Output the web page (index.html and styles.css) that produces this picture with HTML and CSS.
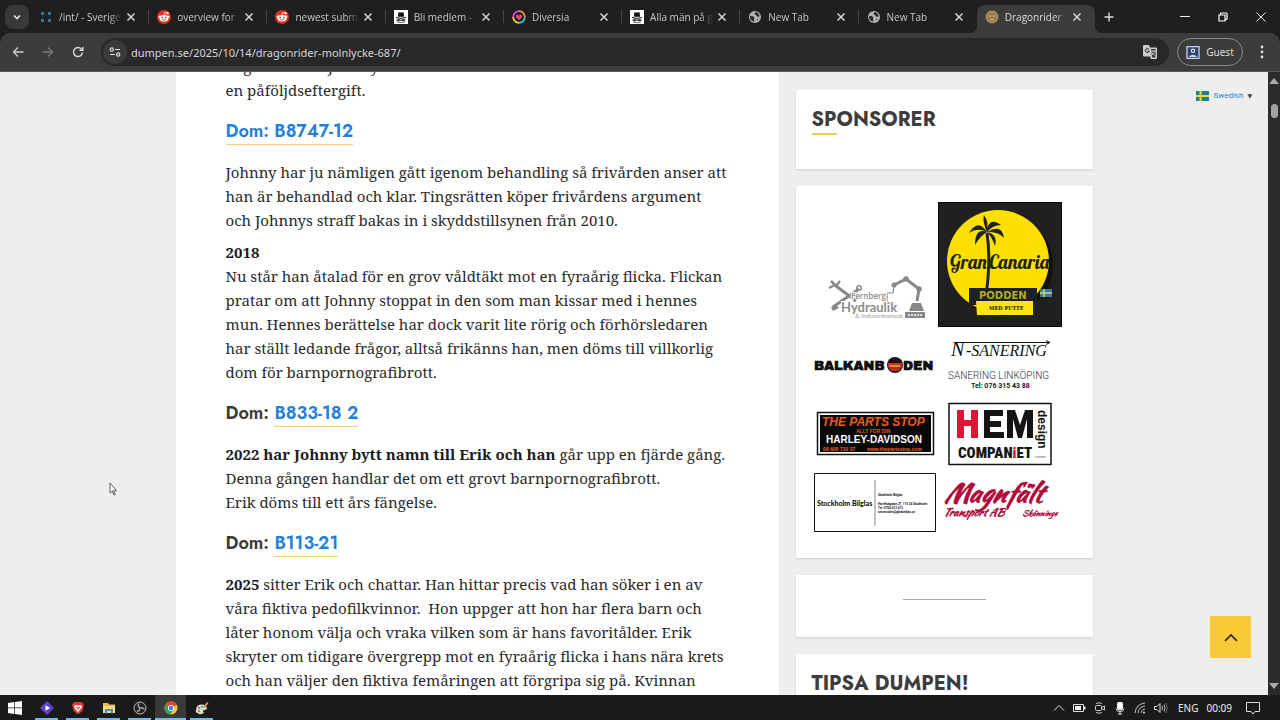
FILE: index.html
```
<!DOCTYPE html>
<html lang="sv">
<head>
<meta charset="utf-8">
<title>Dragonrider</title>
<link rel="stylesheet" href="styles.css">
</head>
<body>
<svg width="0" height="0" class="defs" aria-hidden="true">
  <symbol id="x" viewBox="0 0 10 10"><path d="M1.5 1.5l7 7M8.500 1.500l-7 7" stroke="#d6d6d6" stroke-width="1.500" fill="none"/></symbol>
  <symbol id="reddit" viewBox="0 0 14 14"><circle cx="7" cy="7" r="7" fill="#e2321c"/><circle cx="10.600" cy="3.200" r="1.100" fill="#fff"/><path d="M7 5.200l.7-2.700 2.400.6" stroke="#fff" stroke-width=".7" fill="none"/><circle cx="2.900" cy="6.800" r="1.300" fill="#fff"/><circle cx="11.100" cy="6.800" r="1.300" fill="#fff"/><ellipse cx="7" cy="8.200" rx="4.400" ry="3.200" fill="#fff"/><circle cx="5.200" cy="7.600" r=".9" fill="#e2321c"/><circle cx="8.800" cy="7.600" r=".9" fill="#e2321c"/><path d="M5.200 9.500q1.800 1.200 3.600 0" stroke="#333" stroke-width=".7" fill="none"/></symbol>
  <symbol id="hat" viewBox="0 0 14 14"><path d="M0 0h14v14H0z" fill="#fff"/><path d="M4.500 2q2.500 1 5 0l.6 4.800h-6.200z" fill="#111"/><path d="M2 7.500q5 1.500 10 0" stroke="#111" stroke-width="1.200" fill="none"/><path d="M2 10l2.500-1.200 2.500 1 2.500-1L12 10l-2 1.500-3-.8-3 .8z" fill="#444"/><path d="M3 12q4 1.500 8 0" stroke="#777" fill="none"/></symbol>
  <symbol id="globe" viewBox="0 0 14 14"><circle cx="7" cy="7" r="6" fill="#b4b4b4"/><path d="M2.200 5.800l3 .4 1.300 1.800-.6 1.600.8 1.900Q3 11.500 2 8zM7 2.500l-.5 1.800 1.500.6 1 1.600 2.500.3Q11.500 3 8 2zM9 9l1.600-.3-1.300 2z" fill="#2b2b2b"/></symbol>
</svg>
<div class="desktop">
  <div class="tabstrip">
    <button class="tabsearch" aria-label="Sök flikar"><svg width="10" height="10" viewBox="0 0 10 10"><path d="M2 3.500l3 3 3-3" stroke="#e8e8e8" stroke-width="1.600" fill="none"/></svg></button>
    <div class="tabs">
      <div class="tab"><svg class="fav" viewBox="0 0 14 14"><g fill="#3d8fb0"><path d="M2 2h3v3H2zM9 2h3v3H9zM2 9h3v3H2zM9 9h3v3H9z" opacity=".8"/></g><path d="M3 7h1M10 7h1M7 3v1M7 10v1" stroke="#264b59"/></svg><span>/int/ - Sverige</span><button aria-label="Stäng"><svg><use href="#x"/></svg></button></div>
      <div class="tab"><svg class="fav"><use href="#reddit"/></svg><span>overview for</span><button aria-label="Stäng"><svg><use href="#x"/></svg></button></div>
      <div class="tab"><svg class="fav"><use href="#reddit"/></svg><span>newest subm</span><button aria-label="Stäng"><svg><use href="#x"/></svg></button></div>
      <div class="tab"><svg class="fav"><use href="#hat"/></svg><span>Bli medlem -</span><button aria-label="Stäng"><svg><use href="#x"/></svg></button></div>
      <div class="tab"><svg class="fav" viewBox="0 0 14 14"><g fill="none" stroke-width="1.800"><path d="M7 1.200A5.800 5.800 0 0 1 12.800 7" stroke="#f2a03a"/><path d="M12.800 7A5.800 5.800 0 0 1 7 12.800" stroke="#35c3d8"/><path d="M7 12.800A5.800 5.800 0 0 1 1.200 7" stroke="#e8d335"/><path d="M1.200 7A5.800 5.800 0 0 1 7 1.200" stroke="#d653d8"/></g><path d="M7 10.200L4 7.200q-.7-2.200 1.300-2.400Q6.500 4.700 7 5.700q.5-1 1.700-.9 2 .2 1.300 2.400z" fill="#e8467a"/></svg><span>Diversia</span><button aria-label="Stäng"><svg><use href="#x"/></svg></button></div>
      <div class="tab"><svg class="fav"><use href="#hat"/></svg><span>Alla män på g</span><button aria-label="Stäng"><svg><use href="#x"/></svg></button></div>
      <div class="tab"><svg class="fav"><use href="#globe"/></svg><span>New Tab</span><button aria-label="Stäng"><svg><use href="#x"/></svg></button></div>
      <div class="tab before"><svg class="fav"><use href="#globe"/></svg><span>New Tab</span><button aria-label="Stäng"><svg><use href="#x"/></svg></button></div>
      <div class="tab active"><svg class="fav" viewBox="0 0 14 14"><circle cx="7" cy="7" r="6.500" fill="#b38b4d"/><circle cx="7" cy="7" r="4.500" fill="#8d7a55"/><path d="M4 6h2M8 6h2M5 9q2 1.500 4 0" stroke="#e5c485" fill="none"/></svg><span>Dragonrider</span><button aria-label="Stäng"><svg><use href="#x"/></svg></button></div>
    </div>
    <button class="newtab" aria-label="Ny flik"><svg width="10" height="10" viewBox="0 0 10 10"><path d="M5 .5v9M.5 5h9" stroke="#ddd" stroke-width="1.400"/></svg></button>
    <div class="winctl">
      <button aria-label="Minimera"><svg width="10" height="10"><path d="M0 4.500h10" stroke="#eee"/></svg></button>
      <button aria-label="Återställ"><svg width="10" height="10" viewBox="0 0 10 10"><path d="M1 3h6v6H1zM2.500 3V1.500Q2.500 1 3 1h5.500q.5 0 .5.500V7q0 .5-.5.500H7" stroke="#fff" stroke-width="1.200" fill="none"/></svg></button>
      <button aria-label="Stäng fönster"><svg width="10" height="10"><path d="M.5.5l9 9M9.500.5l-9 9" stroke="#eee"/></svg></button>
    </div>
  </div>
  <div class="toolbar">
    <button class="nav" aria-label="Bakåt"><svg width="12" height="12" viewBox="0 0 12 12"><path d="M11.500 6H1.500M6 1.500L1.500 6 6 10.500" stroke="#ccc" stroke-width="1.300" fill="none"/></svg></button>
    <button class="nav" aria-label="Framåt"><svg width="12" height="12" viewBox="0 0 12 12"><path d="M.5 6h10M6 1.500L10.500 6 6 10.500" stroke="#777" stroke-width="1.300" fill="none"/></svg></button>
    <button class="nav" aria-label="Ladda om"><svg width="12" height="12" viewBox="0 0 12 12"><path d="M10.500 6.500A4.500 4.500 0 1 1 9.300 2.900L10.500 4M10.800 1v3.400H7.400" stroke="#ddd" stroke-width="1.400" fill="none"/></svg></button>
    <div class="omnibox">
      <button class="tune" aria-label="Webbplatsinformation"><svg width="12" height="10" viewBox="0 0 12 10"><g stroke="#ddd" stroke-width="1.200" fill="none"><circle cx="2.800" cy="2.500" r="1.600"/><path d="M6 2.500h5M1 7.500h5"/><circle cx="9.200" cy="7.500" r="1.600"/></g></svg></button>
      <input type="text" aria-label="Adress" value="dumpen.se/2025/10/14/dragonrider-molnlycke-687/">
      <button class="translate" aria-label="Översätt"><svg width="14" height="14" viewBox="0 0 14 14"><path d="M1 0h5l1 2.500h6q1 0 1 1V13q0 1-1 1H8l-1-2.500H1q-1 0-1-1V1q0-1 1-1z" fill="#ccc"/><path d="M8 4h4.500v8.500H9z" fill="#3b3b3b"/><path d="M6 4.300A2 2 0 1 0 6.300 6H4.500" stroke="#222" fill="none"/><path d="M8 6h4.500M10.300 5v1M11.500 6q-.6 2.500-3 4M8.800 7.500q1 2 3 2.800" stroke="#ddd" stroke-width=".8" fill="none"/></svg></button>
    </div>
    <button class="guest"><svg width="14" height="13" viewBox="0 0 14 13"><path d="M1 .7h12v11.600H1z" fill="#31435f" stroke="#bfd3f5" stroke-width="1.300"/><circle cx="7" cy="4.800" r="1.700" fill="none" stroke="#d6e4fb" stroke-width="1.200"/><path d="M2.500 11q4.500-4.500 9 0z" fill="#bfd3f5"/></svg>Guest</button>
    <button class="menu" aria-label="Meny"><svg width="4" height="14" viewBox="0 0 4 14"><g fill="#ddd"><circle cx="2" cy="2" r="1.400"/><circle cx="2" cy="7" r="1.400"/><circle cx="2" cy="12" r="1.400"/></g></svg></button>
  </div>
  <div class="view">
    <div class="page">
      <div class="container">
        <main class="article">
          <p>något med att Johnny<br>en påföljdseftergift.</p>
          <h4><a href="#d1">Dom: B8747-12</a></h4>
          <p>Johnny har ju nämligen gått igenom behandling så frivården anser att<br>han är behandlad och klar. Tingsrätten köper frivårdens argument<br>och Johnnys straff bakas in i skyddstillsynen från 2010.</p>
          <p class="next"><strong>2018</strong><br>Nu står han åtalad för en grov våldtäkt mot en fyraårig flicka. Flickan<br>pratar om att Johnny stoppat in den som man kissar med i hennes<br>mun. Hennes berättelse har dock varit lite rörig och förhörsledaren<br>har ställt ledande frågor, alltså frikänns han, men döms till villkorlig<br>dom för barnpornografibrott.</p>
          <h4>Dom: <a href="#d2">B833-18 2</a></h4>
          <p><strong>2022 har Johnny bytt namn till Erik och han</strong> går upp en fjärde gång.<br>Denna gången handlar det om ett grovt barnpornografibrott.<br>Erik döms till ett års fängelse.</p>
          <h4>Dom: <a href="#d3">B113-21</a></h4>
          <p><strong>2025</strong> sitter Erik och chattar. Han hittar precis vad han söker i en av<br>våra fiktiva pedofilkvinnor.&nbsp; Hon uppger att hon har flera barn och<br>låter honom välja och vraka vilken som är hans favoritålder. Erik<br>skryter om tidigare övergrepp mot en fyraårig flicka i hans nära krets<br>och han väljer den fiktiva femåringen att förgripa sig på. Kvinnan</p>
        </main>
        <aside class="sidebar">
          <section class="card first"><h2>SPONSORER</h2></section>
          <section class="card sponsors">
            <svg width="124" height="125" viewBox="0 0 124 125"><g fill="none" stroke="#888" stroke-width="3"><path d="M23 84L43 99M46 87L20 105"/><path d="M18 79l5 5 4-5M22 83l-6 3" stroke-width="2.500"/><circle cx="46" cy="86" r="2.200" stroke-width="1.500"/><path d="M74 91v8h-3M74 91h6l1-6" stroke-width="1.200"/><path d="M81 83l12-6 13 10-2 12"/></g><g fill="#888"><circle cx="81" cy="83" r="2.500"/><circle cx="93" cy="77" r="2.800"/><circle cx="106" cy="87" r="2.800"/><path d="M99 101h9l3 8H96zM92 110h20v6H92z"/><path d="M18 105l5-2 3 3-6 3z"/></g><path d="M95 113h14" stroke="#ddd" stroke-width="2" stroke-dasharray="2 1"/><g fill="#8c8c8c" font-family="Open Sans, sans-serif" stroke="#fff" stroke-width="2" paint-order="stroke"><text x="38" y="97" font-size="8" font-weight="600">Fernberg</text><text x="28" y="110" font-size="13" font-family="Lato, sans-serif" font-weight="700">Hydraulik</text><text x="42" y="116" font-size="6">&amp; Industrikonsult</text></g></svg>
            <svg width="124" height="125" viewBox="0 0 124 125"><path d="M0 0h124v125H0z" fill="#202020"/><path d="M.5.5h123v124H.5z" fill="none" stroke="#070707"/><circle cx="64" cy="63" r="51" fill="#111"/><circle cx="60" cy="59" r="51" fill="#fde000"/><path d="M49 31Q53 58 48 94" stroke="#222" stroke-width="3" fill="none"/><path d="M49 30Q40 16 31 31q8-6 18-1zM49 30Q37 25 37 43q5-9 12-13zM49 30Q50 14 63 23q-8 0-14 7zM49 30Q64 21 66 36q-6-7-17-6zM49 30Q60 32 57 44q-3-9-8-14zM49 30Q44 19 46 13q5 7 3 17z" fill="#222"/><g font-family="Lobster, Liberation Serif, serif" font-size="19" fill="#20231d"><text x="12" y="67">Gran</text><text x="51" y="67">Canaria</text></g><path d="M31 86h68v17H31z" fill="#1d2126"/><text x="41" y="97" font-family="DejaVu Sans, sans-serif" font-size="10" font-weight="bold" fill="#b1a92b">PODDEN</text><path d="M38 99h57v14H39z" fill="#fbe316"/><text x="51" y="108" font-family="DejaVu Serif, serif" font-size="5" font-weight="bold" fill="#111">MED PUTTE</text><path d="M102 87h12v8h-12z" fill="#347ea0"/><path d="M102 91h12M106 87v8" stroke="#d9d36c" stroke-width="1.500"/></svg>
            <svg width="124" height="60" viewBox="0 0 124 60"><g font-family="Archivo Black, DejaVu Sans, sans-serif" font-size="13" font-weight="bold" fill="#111"><text x="1" y="36">BALKANB</text><text x="90" y="36">DEN</text></g><circle cx="82" cy="31" r="8" fill="#1b1112"/><path d="M75 29h14v4H75z" fill="#d72d28"/><path d="M75 33h14l-3 4h-8z" fill="#b92b20"/><path d="M77 32h10" stroke="#e2b834" stroke-width="1.500"/></svg>
            <svg width="124" height="60" viewBox="0 0 124 60"><path d="M17 8.500h95m-4-2l4 2-4 2" stroke="#111" fill="none"/><text x="13" y="22" font-family="Liberation Serif, serif" font-style="italic" font-size="20" fill="#111">N</text><text x="28" y="22" font-family="Liberation Serif, serif" font-style="italic" font-size="16" fill="#111">-SANERING</text><text x="10" y="45" font-family="Roboto, sans-serif" font-weight="300" font-size="10" fill="#333">SANERING LINKÖPING</text><text x="33" y="54" font-family="Roboto, sans-serif" font-weight="700" font-size="7" fill="#222">Tel: 076 315 43 88</text></svg>
            <svg width="124" height="65" viewBox="0 0 124 65"><path d="M4.500 11.500h116v42H4.500z" fill="#fff" stroke="#111" stroke-width="1.500"/><path d="M7 14h111v37H7z" fill="#080808"/><g font-family="Liberation Sans, sans-serif" font-weight="bold"><text x="9" y="25" font-size="12" font-style="italic" fill="#ef5a22">THE PARTS STOP</text><text x="43" y="32" font-size="5" fill="#e2551f">ALLT FÖR DIN</text><text x="13" y="42" font-size="10" fill="#fff">HARLEY-DAVIDSON</text><text x="10" y="50" font-size="5" fill="#f06025">08-600 710 37</text><text x="54" y="50" font-size="5" fill="#f06025">www.thepartsstop.com</text></g></svg>
            <svg width="124" height="65" viewBox="0 0 124 65"><path d="M11 2.500h102v61H11z" fill="#fff" stroke="#111" stroke-width="1.500"/><g fill="#141414"><path d="M46 9h19v6H52v5h11v6H52v5h14v6H46zM69 9h8l5 15 5-15h8v28h-6V18l-5 19h-4l-5-19v19h-6z"/></g><path d="M19 9h7v10h7V9h7v28h-7V25h-7v12h-7z" fill="#dc1735"/><text x="20" y="57" font-family="Roboto Condensed, Roboto, sans-serif" font-weight="900" font-size="15" fill="#141414">COMPAN<tspan fill="#dc1735">i</tspan>ET</text><text transform="translate(100 9) rotate(90)" font-family="Liberation Sans, sans-serif" font-weight="bold" font-size="12" fill="#111">design</text><text x="97" y="57" font-family="Liberation Sans, sans-serif" font-size="4" fill="#555">center</text></svg>
            <svg width="124" height="60" viewBox="0 0 124 60"><path d="M1.500.5h121v58H1.500z" fill="#fff" stroke="#111"/><path d="M62 7v46" stroke="#999" stroke-width="1.200"/><text x="4" y="33" font-family="Lato, sans-serif" font-weight="900" font-size="7" fill="#111">Stockholm Bilglas</text><g font-family="Roboto, sans-serif" font-weight="700" font-size="3" fill="#111"><text x="65" y="23">Stockholm Bilglas</text><text x="65" y="32">Hornfiskgatan 27, 115 34 Stockholm</text><text x="65" y="36">Tel: 0704-413 413</text><text x="65" y="40">universalen@gladsteljas.se</text></g></svg>
            <svg width="124" height="60" viewBox="0 0 124 60"><g font-family="Kaushan Script, Liberation Serif, serif" font-style="italic" font-weight="bold" fill="#b00d3c"><text x="6" y="29" font-size="26">Magnfält</text><text x="5" y="43" font-size="11">Transport AB</text><text x="84" y="43" font-size="8">Skänninge</text></g></svg>
          </section>
          <section class="card rule"><hr></section>
          <section class="card tips"><h2>TIPSA DUMPEN!</h2></section>
        </aside>
      </div>
      <a class="lang" href="#lang"><svg width="13" height="10" viewBox="0 0 13 10"><path d="M0 0h13v10H0z" fill="#1b7f9c"/><path d="M0 5h13M4.500 0v10" stroke="#f3da35" stroke-width="2"/></svg>Swedish<span>▼</span></a>
      <button class="totop" aria-label="Till toppen"><svg width="14" height="9" viewBox="0 0 14 9"><path d="M1 8l6-6 6 6" stroke="#2b1c10" stroke-width="1.600" fill="none"/></svg></button>
      <svg class="cursor" width="8" height="14" viewBox="0 0 8 14"><path d="M1 1v10l2.300-2 1.700 4 1.200-.5-1.600-3.800H7.500z" fill="#fff" stroke="#333" stroke-width=".8"/></svg>
    </div>
    <div class="scrollbar"><svg width="10" height="6"><path d="M0 6l5-6 5 6z" fill="#aaa"/></svg><i></i><svg class="down" width="10" height="6"><path d="M0 0l5 6 5-6z" fill="#aaa"/></svg></div>
  </div>
  <footer class="taskbar">
    <button class="start" aria-label="Start"><svg width="14" height="14" viewBox="0 0 14 14"><path d="M0 2l6-.9v5.500H0zM6.700 1L14 0v6.600H6.700zM0 7.300h6v5.600L0 12zM6.700 7.300H14V14l-7.300-1z" fill="#fff"/></svg></button>
    <button class="app" aria-label="Video"><svg viewBox="0 0 14 14"><path d="M7 0l7 7-7 7-7-7z" fill="#5b45c9"/><path d="M5.500 4.300L10 7l-4.500 2.700z" fill="#fff"/></svg></button>
    <button class="app" aria-label="Brave"><svg viewBox="0 0 14 14"><path d="M3.500 1h7l2.500 2.500-1.500 6.500L7 13.500 2.500 10 1 3.500z" fill="#e0382c"/><path d="M4 4l3 .6L10 4l1 2-2.500 3.500L7 11 5.500 9.500 3 6z" fill="#fff"/><path d="M5 6l2 1 2-1M7 7v2" stroke="#e0382c" fill="none"/></svg></button>
    <button class="app" aria-label="Utforskaren"><svg viewBox="0 0 14 14"><path d="M1 2h5l1 1.500h6V12H1z" fill="#e9bf4b"/><path d="M1 5h12v7H1z" fill="#f5dd82"/><path d="M3 8h8v4.500H9V10H5v2.500H3z" fill="#4c8fae"/></svg></button>
    <button class="app" aria-label="OBS"><svg viewBox="0 0 14 14"><circle cx="7" cy="7" r="6" fill="#222" stroke="#bbb"/><path d="M7 7Q4 5 6 2.500M7 7q3-1 4.500 1.500M7 7q0 3-3 3.500" stroke="#aaa" stroke-width="1.300" fill="none"/></svg></button>
    <button class="app on" aria-label="Chrome"><svg viewBox="0 0 14 14"><circle cx="7" cy="7" r="6.500" fill="#f4c534"/><path d="M7 7L1.400 3.700A6.500 6.500 0 0 1 12.700 4z" fill="#df4638"/><path d="M7 7L1.400 3.700A6.500 6.500 0 0 0 6.500 13.500L9.500 8z" fill="#31a353"/><circle cx="7" cy="7" r="3" fill="#fff"/><circle cx="7" cy="7" r="2.300" fill="#4285df"/></svg></button>
    <button class="app" aria-label="Paint"><svg viewBox="0 0 14 14"><path d="M1 9Q1 4 6 3.500T12 7q0 2-2.500 2T9 12q-3 2-6 .5T1 9z" fill="#d8dcc9"/><path d="M8 6l4-5 1.500 1L10 7z" fill="#c79a4d"/><circle cx="4" cy="7" r="1" fill="#d35045"/><circle cx="7" cy="6" r="1" fill="#4c8fbd"/><circle cx="4" cy="10" r="1" fill="#4f9a55"/></svg></button>
    <div class="tray">
      <svg width="12" height="12" viewBox="0 0 12 12"><path d="M1 8.500l5-5 5 5" stroke="#ddd" fill="none"/></svg>
      <svg width="13" height="12" viewBox="0 0 13 12"><path d="M.5 2.500h10v7H.5z" fill="none" stroke="#ddd"/><path d="M2 4h6v4H2zM11 4.500h1.500v3H11z" fill="#eee"/></svg>
      <svg width="12" height="12" viewBox="0 0 12 12"><g fill="none" stroke="#ccc"><rect x="1.500" y="3.500" width="6" height="5" rx="1"/><path d="M7.500 5.500l3-1.500v4l-3-1.500M2 1.500Q5 0 8 1.500M2 10.500Q5 12 8 10.500"/></g></svg>
      <svg width="12" height="14" viewBox="0 0 12 14"><rect x="3" y="1" width="6" height="8" rx="2" fill="#fff"/><path d="M2 7.500q0 3 4 3t4-3M6 10v3M4 13h4" stroke="#eee" fill="none"/></svg>
      <svg width="12" height="12" viewBox="0 0 12 12"><g fill="none" stroke="#bbb"><path d="M1 11Q2 2 11 1M4 11q.5-6 7-7M7 11q.5-3.500 4-4"/></g><circle cx="10" cy="10.500" r="1" fill="#ddd"/></svg>
      <svg width="14" height="12" viewBox="0 0 14 12"><path d="M.5 4.500H3l3-3v9l-3-3H.5z" fill="none" stroke="#ddd"/><path d="M8 4q1 2 0 4M10 2.500q2 3.500 0 7" stroke="#bbb" fill="none"/><path d="M12 1q2.500 5 0 10" stroke="#666" fill="none"/></svg>
      <span class="eng">ENG</span><span class="clock">00:09</span>
      <svg class="note" width="14" height="14" viewBox="0 0 14 14"><path d="M.5 1.500h13v9H9l-2 2.500-2-2.500H.5z" fill="none" stroke="#ddd"/></svg>
    </div>
  </footer>
</div>
</body>
</html>
```
FILE: styles.css
```
* { box-sizing: border-box; }
body { margin: 0; font-family: "Noto Sans", sans-serif; background: #1b1b1b; }
button { border: 0; padding: 0; margin: 0; background: none; font: inherit; color: inherit; display: flex; align-items: center; justify-content: center; flex: none; }
svg { display: block; flex: none; }
.defs { position: absolute; }
.desktop { height: 100vh; display: flex; flex-direction: column; overflow: hidden; }

.tabstrip { height: 33px; flex: none; display: flex; align-items: center; background: #1f1f1f; color: #c8c8c8; font-size: 10px; }
.tabsearch { width: 24px; height: 24px; margin: 0 2px 0 5px; border-radius: 8px; background: #383838; }
.tabs { flex: 0 1 1066px; min-width: 0; align-self: stretch; display: flex; font-family: "Open Sans", sans-serif; }
.tab { flex: 1 1 0; min-width: 0; display: flex; align-items: center; padding-left: 8px; position: relative; }
.tab::after { content: ""; position: absolute; right: 0; top: 10px; height: 13px; width: 1px; background: #444; }
.tab.before::after { display: none; }
.fav { width: 14px; height: 14px; margin-right: 6px; }
.tab span { flex: 1; min-width: 0; white-space: nowrap; overflow: hidden; mask-image: linear-gradient(90deg, #000 80%, transparent); }
.tab button { width: 10px; margin: 0 13px 0 4px; }
.tab button svg { width: 10px; height: 10px; }
.tab.active { background: #3c3c3c; margin: 5px 2px 0 0; padding-bottom: 5px; border-radius: 8px 8px 0 0; color: #ddd; }
.tab.active::before, .tab.active::after { content: ""; position: absolute; top: auto; bottom: 0; width: 7px; height: 7px; }
.tab.active::before { left: -7px; background: radial-gradient(circle at 0 0, transparent 7px, #3c3c3c 7px); }
.tab.active::after { right: -7px; background: radial-gradient(circle at 100% 0, transparent 7px, #3c3c3c 7px); }
.newtab { width: 24px; height: 24px; }
.winctl { margin-left: auto; display: flex; align-self: stretch; }
.winctl button { width: 38px; }

.toolbar { height: 39px; flex: none; display: flex; align-items: center; background: #3c3c3c; border-bottom: 1px solid #5c5c5c; border-radius: 10px 10px 0 0; padding: 0 13px 0 3px; color: #ddd; }
.nav { width: 30px; height: 28px; }
.omnibox { flex: 1; height: 28px; margin: 0 8px; display: flex; align-items: center; border-radius: 14px; background: #282828; padding: 0 12px 0 2px; }
.tune { width: 24px; height: 24px; border-radius: 12px; background: #3a3a3a; }
.omnibox input { flex: 1; min-width: 0; border: 0; outline: 0; padding: 0 4px; background: none; color: #d6d6d6; font: 11px "Noto Sans", sans-serif; }
.guest { height: 28px; width: 66px; border: 1px solid #8a8a8a; border-radius: 14px; gap: 6px; font-size: 10px; }
.menu { width: 10px; height: 28px; margin-left: 14px; }

.view { flex: 1; min-height: 0; display: flex; }
.page { flex: 1; min-width: 0; position: relative; overflow: hidden; background: #eee; }
.container { max-width: 917px; height: 100%; margin: 0 auto; display: grid; grid-template-columns: minmax(0, 603fr) minmax(0, 297fr); gap: 17px; }
.article { background: #fff; padding: 0 50px; color: #2b2b2b; font-family: "Noto Serif", "DejaVu Serif Condensed", "Liberation Serif", serif; font-size: 15px; line-height: 24px; white-space: nowrap; }
.article p { margin: 0; }
.article p:first-child { margin-top: -18px; }
.article .next { margin-top: 8px; }
.article strong { color: #1c1c1c; }
.article h4 { margin: 16px 0 15px; font: 600 18px/27px Jost, Lato, sans-serif; color: #3a3a3a; height: 27px; }
.article h4 a { display: inline-block; height: 27px; color: #2280d6; text-decoration: none; border-bottom: 1px solid #f3cf7c; }

.sidebar { min-width: 0; padding-top: 18px; display: flex; flex-direction: column; gap: 17px; }
.card { background: #fff; padding: 16px; box-shadow: 0 1px 2px #ccc; flex: none; }
.card h2 { margin: 0; font: 700 20px/28px Jost, Lato, sans-serif; color: #3d3d3d; }
.first { padding-bottom: 34px; }
.first h2::after { content: ""; display: block; width: 25px; height: 2px; margin-top: -1px; background: #f0cc45; }
.sponsors { display: grid; grid-template-columns: max-content max-content; gap: 7px 1px; padding: 16px 16px 25px 17px; }
.rule { padding: 24px 0 37px; }
.rule hr { width: 83px; height: 1px; border: 0; margin: 0 auto; background: #aaa; }

.lang { position: absolute; top: 18px; right: 16px; display: flex; align-items: center; gap: 4px; font: 8px/12px Roboto, sans-serif; color: #2b84d4; text-decoration: none; }
.lang span { color: #444; font-size: 6px; font-family: "DejaVu Sans", sans-serif; }
.totop { position: absolute; right: 17px; bottom: 37px; width: 41px; height: 42px; background: #f9cc35; }
.cursor { position: absolute; left: 109px; top: 410px; }
.scrollbar { width: 12px; flex: none; background: #2b2b2b; display: flex; flex-direction: column; align-items: center; padding: 6px 0; }
.scrollbar i { width: 7px; height: 14px; margin-top: 20px; border-radius: 4px; background: #a2a2a2; }
.scrollbar .down { margin-top: auto; }

.taskbar { height: 25px; flex: none; display: flex; background: #1a1a1a; color: #eee; font-size: 10px; }
.start { width: 31px; padding-right: 2px; }
.app { width: 31px; position: relative; }
.app svg { width: 14px; height: 14px; }
.app::after { content: ""; position: absolute; left: 4px; right: 4px; bottom: 0; height: 2px; background: #76b9e6; }
.app.on { background: #3a3a3a; }
.app.on::after { left: 0; right: 0; }
.tray { margin-left: auto; display: flex; align-items: center; gap: 8px; padding-right: 20px; }
.eng { margin-left: 2px; }
.note { margin-left: 6px; }
```
